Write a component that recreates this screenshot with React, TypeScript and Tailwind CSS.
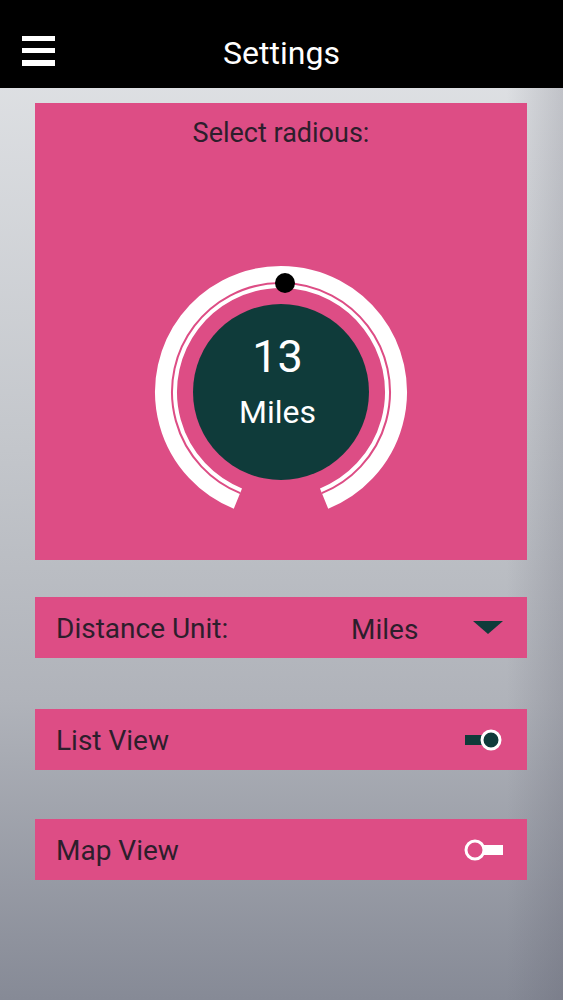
import { useState } from "react";

const FONT = "font-['Roboto',sans-serif]";

function Toggle(props: { on: boolean }) {
    if (props.on) {
        return (
            <svg width="40" height="24" viewBox="0 0 40 24">
                <rect x="1" y="7" width="20" height="10" fill="#0f3b3a" />
                <circle cx="27" cy="12" r="9" fill="#0f3b3a" stroke="#fff" strokeWidth="3" />
            </svg>
        );
    }
    return (
        <svg width="40" height="24" viewBox="0 0 40 24">
            <rect x="20" y="7" width="19" height="10" fill="#fff" />
            <circle cx="11" cy="12" r="9" fill="#dd4d85" stroke="#fff" strokeWidth="3" />
        </svg>
    );
}

function Gauge(props: { value: number }) {
    return (
        <div className="relative w-[260px] h-[260px] mx-auto">
            <svg width="260" height="260" viewBox="0 0 260 260">
                <path d="M 86.9 236.6 A 115 115 0 1 1 173.1 236.6" fill="none" stroke="#fff" strokeWidth="22" />
                <path d="M 89.2 231.1 A 109 109 0 1 1 170.8 231.1" fill="none" stroke="#dd4d85" strokeWidth="2" />
                <circle cx="130" cy="130" r="88" fill="#0f3b3a" />
                <circle cx="134" cy="21" r="10" fill="#000" />
            </svg>
            <div className="absolute inset-0 flex flex-col items-center text-white pr-[7px]">
                <div className="mt-[73px] text-[45px] leading-[44px]">{props.value}</div>
                <div className="mt-[15px] text-[32px] leading-[36px]">Miles</div>
            </div>
        </div>
    );
}

export default function App() {
    const [listView, setListView] = useState(true);

    return (
        <div className={`${FONT} w-full h-[1000px] flex flex-col bg-[linear-gradient(to_right,transparent_90%,rgba(80,80,95,0.2)),linear-gradient(to_bottom,#e3e5e8,#c3c6cb_45%,#b0b3ba_70%,#868a96)]`}>

            <div className="h-[88px] bg-black flex flex-row items-start relative shrink-0">
                <div className="ml-[22px] mt-[36px] flex flex-col gap-[7px]">
                    <div className="w-[33px] h-[5px] bg-white" />
                    <div className="w-[33px] h-[5px] bg-white" />
                    <div className="w-[33px] h-[6px] bg-white" />
                </div>
                <div className="absolute inset-x-0 top-[34px] text-center text-white text-[32px] leading-[38px]">Settings</div>
            </div>

            <div className="ml-[35px] w-[492px] mt-[15px] bg-[#dd4d85] flex flex-col pt-[14px] pb-[38px]">
                <div className="text-center text-[27px] leading-[32px] text-[#2d1e2c]">Select radious:</div>
                <div className="mt-[113px]">
                    <Gauge value={13} />
                </div>
            </div>

            <div className="ml-[35px] w-[492px] mt-[37px] h-[61px] bg-[#dd4d85] flex flex-row items-center text-[28px] text-[#2d1e2c]">
                <div className="ml-[21px] w-[295px] mt-[2px]">Distance Unit:</div>
                <div className="flex-1 mt-[4px]">Miles</div>
                <svg width="30" height="14" viewBox="0 0 30 14" className="mr-[24px]">
                    <polygon points="0,0 30,0 15,13" fill="#0f3b3a" />
                </svg>
            </div>

            <div
                className="ml-[35px] w-[492px] mt-[51px] h-[61px] bg-[#dd4d85] flex flex-row items-center justify-between text-[28px] text-[#2d1e2c]"
                onClick={() => setListView(!listView)}>
                <div className="ml-[21px] mt-[2px]">List View</div>
                <div className="mr-[23px]">
                    <Toggle on={listView} />
                </div>
            </div>

            <div
                className="ml-[35px] w-[492px] mt-[49px] h-[61px] bg-[#dd4d85] flex flex-row items-center justify-between text-[28px] text-[#2d1e2c]"
                onClick={() => setListView(!listView)}>
                <div className="ml-[21px] mt-[2px]">Map View</div>
                <div className="mr-[23px]">
                    <Toggle on={!listView} />
                </div>
            </div>

        </div>
    );
}
